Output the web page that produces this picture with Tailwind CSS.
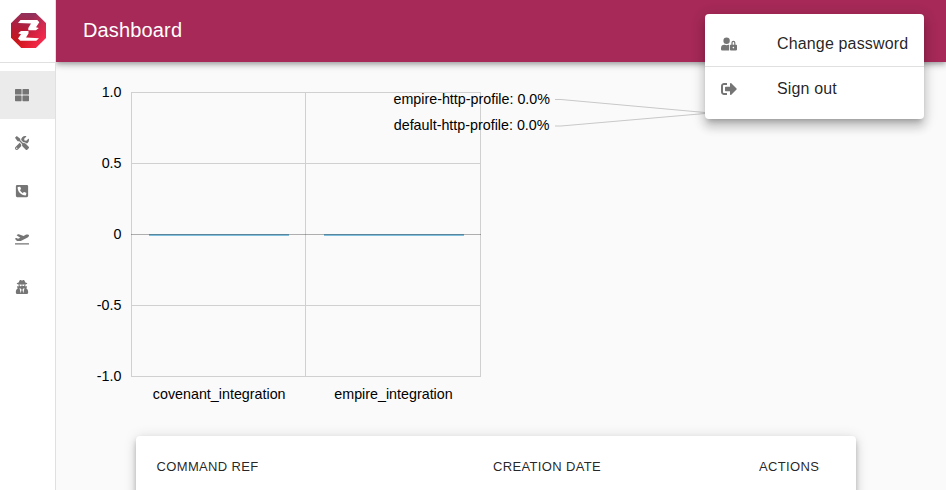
<!DOCTYPE html>
<html lang="en">
<head>
<meta charset="utf-8">
<title>Dashboard</title>
<script src="https://cdn.jsdelivr.net/npm/@tailwindcss/browser@4"></script>
</head>
<body class="relative h-[490px] w-[946px] overflow-hidden bg-[#fafafa] font-['Liberation_Sans',Arial,sans-serif] text-black/87">
<div class="flex h-full">
  <aside class="flex w-14 shrink-0 flex-col border-r border-[#e0e0e0] bg-white">
    <div class="flex h-[63px] justify-center border-b border-[#e0e0e0] pt-[13px]">
      <svg class="mr-[-2px] size-[35px]" viewBox="0 0 35 35">
        <defs>
          <linearGradient id="base" x1="0.6" y1="0" x2="0.4" y2="1"><stop offset="0" stop-color="#8f335f"/><stop offset=".5" stop-color="#b51c38"/><stop offset="1" stop-color="#d0140f"/></linearGradient>
          <linearGradient id="glow" x1="0.1" y1="0.2" x2="1" y2="0.8"><stop offset=".35" stop-color="#ff2d55" stop-opacity="0"/><stop offset="1" stop-color="#ff2d55" stop-opacity=".95"/></linearGradient>
        </defs>
        <path d="M10.300 0h14.400L35 10.300v14.400L24.700 35H10.300L0 24.700V10.300z" fill="url(#base)"/>
        <path d="M10.300 0h14.400L35 10.300v14.400L24.700 35H10.300L0 24.700V10.300z" fill="url(#glow)"/>
        <path d="M9.500 7H26.300L28.300 9.300L25 14.300L27.800 15L25 17.300H17.300V15L20 10.500L7 9.900z" fill="#fff"/>
        <path d="M17.500 17.900H10L7.200 20.300L10 21.300L7 25.400L9.300 27.800H25.300L28 25.200L15 24.600L17.500 20.500z" fill="#fff"/>
      </svg>
    </div>
    <nav class="flex flex-col pt-2 text-[#757575]">
      <a class="flex h-12 items-center bg-[#ebebeb] pl-[15px]"><svg class="size-3.5" viewBox="0 0 512 512" fill="currentColor"><path d="M296 32h192c13.255 0 24 10.745 24 24v160c0 13.255-10.745 24-24 24H296c-13.255 0-24-10.745-24-24V56c0-13.255 10.745-24 24-24zm-80 0H24C10.745 32 0 42.745 0 56v160c0 13.255 10.745 24 24 24h192c13.255 0 24-10.745 24-24V56c0-13.255-10.745-24-24-24zM0 296v160c0 13.255 10.745 24 24 24h192c13.255 0 24-10.745 24-24V296c0-13.255-10.745-24-24-24H24c-13.255 0-24 10.745-24 24zm296 184h192c13.255 0 24-10.745 24-24V296c0-13.255-10.745-24-24-24H296c-13.255 0-24 10.745-24 24v160c0 13.255 10.745 24 24 24z"/></svg></a>
      <a class="flex h-12 items-center pl-[15px]"><svg class="size-3.5" viewBox="0 0 512 512" fill="currentColor"><path d="M501.100 395.700L384 278.600c-23.100-23.100-57.600-27.600-85.400-13.900L192 158.100V96L64 0 0 64l96 128h62.100l106.600 106.600c-13.600 27.800-9.200 62.300 13.900 85.400l117.100 117.100c14.600 14.600 38.200 14.600 52.700 0l52.700-52.700c14.500-14.600 14.500-38.200 0-52.700zM331.700 225c28.300 0 54.900 11 74.900 31l19.400 19.400c15.800-6.900 30.800-16.500 43.800-29.500 37.100-37.100 49.700-89.300 37.900-136.700-2.200-9-13.500-12.100-20.100-5.500l-74.400 74.400-67.900-11.300L334 98.900l74.400-74.400c6.600-6.600 3.400-17.900-5.700-20.200-47.400-11.700-99.600.9-136.600 37.900-28.500 28.500-41.900 66.100-41.200 103.600l82.100 82.100c8.100-1.900 16.500-2.900 24.700-2.900zm-103.900 82l-56.700-56.700L18.700 402.800c-25 25-25 65.500 0 90.500s65.500 25 90.500 0l123.600-123.600c-7.600-19.900-9.900-41.600-5-62.700zM64 472c-13.200 0-24-10.800-24-24 0-13.300 10.700-24 24-24s24 10.700 24 24c0 13.200-10.700 24-24 24z"/></svg></a>
      <a class="flex h-12 items-center pl-[15px]"><svg class="size-3.5" viewBox="0 0 448 512" fill="currentColor"><path d="M400 32H48A48 48 0 0 0 0 80v352a48 48 0 0 0 48 48h352a48 48 0 0 0 48-48V80a48 48 0 0 0-48-48zm-16.390 307.370l-15 65A15 15 0 0 1 354 416C194 416 64 286.290 64 126a15.700 15.700 0 0 1 11.630-14.610l65-15A18.230 18.230 0 0 1 144 96a16.270 16.270 0 0 1 13.790 9.090l30 70A17.900 17.900 0 0 1 189 181a17 17 0 0 1-5.500 11.610l-37.890 31a231.910 231.910 0 0 0 110.780 110.780l31-37.890A17 17 0 0 1 299 291a17.850 17.850 0 0 1 5.910 1.210l70 30A16.250 16.250 0 0 1 384 336a17.410 17.410 0 0 1-.39 3.370z"/></svg></a>
      <a class="flex h-12 items-center pl-[15px]"><svg class="size-3.5" viewBox="0 0 640 512" fill="currentColor"><path d="M624 448H16c-8.840 0-16 7.160-16 16v32c0 8.840 7.160 16 16 16h608c8.840 0 16-7.160 16-16v-32c0-8.840-7.160-16-16-16zM80.550 341.270c6.280 6.840 15.100 10.720 24.330 10.710l130.540-.18a65.620 65.620 0 0 0 29.640-7.120l290.960-147.650c26.740-13.570 50.710-32.940 67.020-58.310 18.310-28.480 20.300-49.090 13.070-63.650-7.210-14.570-24.740-25.270-58.250-27.450-29.850-1.940-59.540 5.920-86.280 19.480l-98.510 49.990-218.700-82.060a17.799 17.799 0 0 0-18-1.110L90.620 67.290c-10.670 5.410-13.250 19.650-5.170 28.530l156.220 98.100-103.210 52.380-72.350-36.470a17.804 17.804 0 0 0-16.070.02L9.910 230.220c-10.440 5.300-13.190 19.120-5.570 28.080l76.210 82.970z"/></svg></a>
      <a class="flex h-12 items-center pl-[15px]"><svg class="size-3.5" viewBox="0 0 448 512" fill="currentColor"><path d="M383.900 308.300l23.900-62.600c4-10.500-3.700-21.700-15-21.700h-58.500c11-18.900 17.800-40.600 17.800-64v-.3c39.200-7.800 64-19.100 64-31.700 0-13.300-27.300-25.100-70.100-33-9.200-32.800-27-65.800-40.600-82.800-9.500-11.900-25.900-15.600-39.500-8.800l-27.600 13.800c-9 4.500-19.600 4.500-28.600 0L182.100 3.400c-13.600-6.800-30-3.100-39.500 8.800-13.500 17-31.400 50-40.600 82.800-42.700 7.900-70 19.700-70 33 0 12.600 24.800 23.900 64 31.700v.3c0 23.400 6.800 45.100 17.800 64H56.300c-11.500 0-19.200 11.700-14.700 22.300l25.800 60.200C27.300 329.800 0 372.700 0 422.400v44.800C0 491.900 20.100 512 44.800 512h358.400c24.700 0 44.800-20.100 44.800-44.800v-44.800c0-48.400-25.800-90.400-64.100-114.100zM176 480l-41.600-192 49.600 32 24 40-32 120zm96 0l-32-120 24-40 49.600-32L272 480zm41.700-298.500c-3.900 11.900-7 24.600-16.500 33.400-10.100 9.300-48 22.400-64-25-2.800-8.400-15.400-8.400-18.300 0-17 50.200-56 32.400-64 25-9.500-8.800-12.700-21.500-16.500-33.400-.8-2.500-6.300-5.700-6.300-5.800v-10.800c28.300 3.600 61 5.800 96 5.800s67.700-2.100 96-5.800v10.800c-.1.1-5.600 3.200-6.400 5.800z"/></svg></a>
    </nav>
  </aside>
  <div class="flex min-w-0 flex-1 flex-col overflow-hidden">
    <header class="flex h-[62px] shrink-0 items-center bg-[#a62957] pl-[27px] shadow-[0_2px_4px_-1px_rgba(0,0,0,0.2),0_4px_5px_0_rgba(0,0,0,0.14),0_1px_10px_0_rgba(0,0,0,0.12)]">
      <h1 class="pb-0.5 text-xl tracking-[0.0075em] text-white">Dashboard</h1>
    </header>
    <main class="flex flex-col">
      <svg class="h-[374px] w-[890px] shrink-0 text-[14.3px]" viewBox="56 62 890 374" fill="none">
        <g stroke="#000" stroke-opacity=".17" shape-rendering="crispEdges">
          <path d="M131 92.500H481M131 163.500H481M131 305.500H481M131 376.500H481M131.500 93V376M305.500 93V376M480.500 93V376"/>
        </g>
        <path d="M149 235H289M324 235H464" stroke="#61b0d6" stroke-opacity=".8" stroke-width="2"/>
        <path d="M131 234.500H481" stroke="#000" stroke-opacity=".3"/>
        <path d="M555 99.500H561L705 112.500M555 126H561L705 113.500" stroke="#000" stroke-opacity=".2"/>
        <g fill="#000" text-anchor="end">
          <text x="121.500" y="97">1.0</text><text x="121.500" y="168">0.5</text><text x="121.500" y="239">0</text><text x="121.500" y="310">-0.5</text><text x="121.500" y="381">-1.0</text>
          <text x="550" y="104">empire-http-profile: 0.0%</text><text x="549.500" y="130">default-http-profile: 0.0%</text>
        </g>
        <g fill="#000" text-anchor="middle"><text x="219.200" y="399">covenant_integration</text><text x="393.500" y="399">empire_integration</text></g>
      </svg>
      <section class="mx-20 h-24 w-[720px] rounded bg-white shadow-[0_3px_5px_-1px_rgba(0,0,0,0.2),0_5px_8px_0_rgba(0,0,0,0.14),0_1px_14px_0_rgba(0,0,0,0.12)]">
        <div class="grid grid-cols-[336.500px_266px_1fr] pt-[21px] pl-[20.500px] text-[13px] leading-5 tracking-[0.35px] uppercase">
          <span>Command Ref</span><span>Creation Date</span><span>Actions</span>
        </div>
      </section>
    </main>
  </div>
</div>
<div class="absolute top-3.5 left-[705px] flex h-[105px] w-[219px] flex-col rounded bg-white pt-2 tracking-[0.00938em] shadow-[0_5px_5px_-3px_rgba(0,0,0,0.2),0_8px_10px_1px_rgba(0,0,0,0.14),0_3px_14px_2px_rgba(0,0,0,0.12)]">
  <div class="flex h-11 items-center gap-10 pl-4"><svg class="size-4 text-[#757575]" viewBox="0 0 640 512" fill="currentColor"><path d="M224 256A128 128 0 1 0 96 128a128 128 0 0 0 128 128zm96 64a63.080 63.080 0 0 1 8.100-30.500c-4.800-.5-9.500-1.500-14.500-1.500h-16.700a174.080 174.080 0 0 1-145.800 0h-16.700A134.430 134.430 0 0 0 0 422.400V464a48 48 0 0 0 48 48h280.900a63.540 63.540 0 0 1-8.900-32zm288-32h-32v-80a80 80 0 0 0-160 0v80h-32a32 32 0 0 0-32 32v160a32 32 0 0 0 32 32h224a32 32 0 0 0 32-32V320a32 32 0 0 0-32-32zM496 432a32 32 0 1 1 32-32 32 32 0 0 1-32 32zm32-144h-64v-80a32 32 0 0 1 64 0z"/></svg><span>Change password</span></div>
  <hr class="border-[#e0e0e0]">
  <div class="flex h-11 items-center gap-10 pl-4"><svg class="size-4 text-[#757575]" viewBox="0 0 512 512" fill="currentColor"><path d="M497 273L329 441c-15 15-41 4.500-41-17v-96H152c-13.300 0-24-10.700-24-24v-96c0-13.300 10.700-24 24-24h136V88c0-21.400 25.900-32 41-17l168 168c9.300 9.400 9.300 24.600 0 34zM192 436v-40c0-6.600-5.400-12-12-12H96c-17.700 0-32-14.300-32-32V160c0-17.700 14.300-32 32-32h84c6.600 0 12-5.400 12-12V76c0-6.600-5.400-12-12-12H96c-53 0-96 43-96 96v192c0 53 43 96 96 96h84c6.600 0 12-5.400 12-12z"/></svg><span>Sign out</span></div>
</div>
</body>
</html>
